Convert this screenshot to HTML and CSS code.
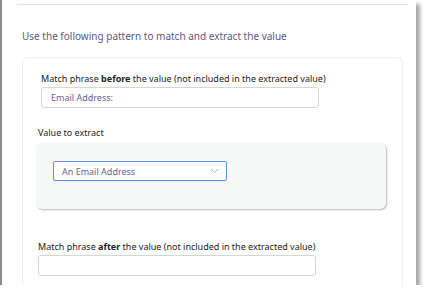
FILE: index.html
```html
<!DOCTYPE html>
<html lang="en">
<head>
  <meta charset="UTF-8" />
  <title>Extract value</title>
  <link rel="stylesheet" href="styles.css">
</head>
<body>

  <div class="window">
    <div class="rule"></div>

    <p class="heading">Use the following pattern to match and extract the value</p>

    <div class="card">
      <div class="field field-first">
        <label class="label">Match phrase <b>before</b> the value (not included in the extracted value)</label>
        <div class="input">Email Address:</div>
      </div>

      <div class="field">
        <label class="label">Value to extract</label>
        <div class="value-box">
          <div class="select">
            <span>An Email Address</span>
            <svg class="chevron" width="9" height="6" viewBox="0 0 9 6">
              <path d="M1 1 L4.5 4.5 L8 1" fill="none" stroke="#b4b4b8" stroke-width="1"/>
            </svg>
          </div>
        </div>
      </div>

      <div class="field field-after">
        <label class="label">Match phrase <b>after</b> the value (not included in the extracted value)</label>
        <div class="input"></div>
      </div>
    </div>
  </div>

</body>
</html>
```

FILE: styles.css
```css
body, html {
  margin: 0;
  padding: 0;
  background: #fff;
  font-family: "Noto Sans", "Open Sans", sans-serif;
  overflow: hidden;
}

.window {
  width: 416px;
  height: 285px;
  box-sizing: border-box;
  border-left: 2px solid #8c8c8c;
  box-shadow: 4px 4px 4px rgba(0, 0, 0, 0.35);
  padding: 4px 8px 0 20px;
  overflow: hidden;
  background: #fff;
}

.rule {
  height: 1px;
  background: #e3e3e3;
  margin-left: -5px;
}

.heading {
  margin: 24px 0 14px;
  font-size: 10px;
  line-height: 14px;
  color: #5b5985;
}

.card {
  margin-right: 5px;
  border: 1px solid #efefef;
  border-bottom: none;
  border-radius: 6px 6px 0 0;
  padding: 14px 16px 40px 15px;
  height: 300px;
}

.field-first {
  padding-left: 3px;
}

.field + .field {
  margin-top: 18px;
}

.field-after {
  margin-top: 31px !important;
}

.label {
  display: block;
  font-size: 9px;
  line-height: 13px;
  color: #222;
}

.label b {
  font-weight: bold;
}

.input {
  width: 278px;
  height: 21px;
  box-sizing: border-box;
  margin-top: 2px;
  border: 1px solid #d6d6d6;
  border-radius: 3px;
  padding: 0 9px;
  font-size: 9px;
  line-height: 19px;
  color: #67648f;
}

.value-box {
  width: 350px;
  height: 66px;
  box-sizing: border-box;
  margin-top: 4px;
  margin-left: -2px;
  padding: 18px 17px;
  background: #f6f8f8;
  border-radius: 6px;
  box-shadow: 1px 1px 2px rgba(0, 0, 0, 0.28);
}

.select {
  width: 174px;
  height: 20px;
  box-sizing: border-box;
  border: 1.5px solid #5d90e3;
  border-radius: 2px;
  background: #fff;
  display: flex;
  align-items: center;
  justify-content: space-between;
  padding: 0 7px 0 8px;
  font-size: 9px;
  color: #67648f;
}
```
